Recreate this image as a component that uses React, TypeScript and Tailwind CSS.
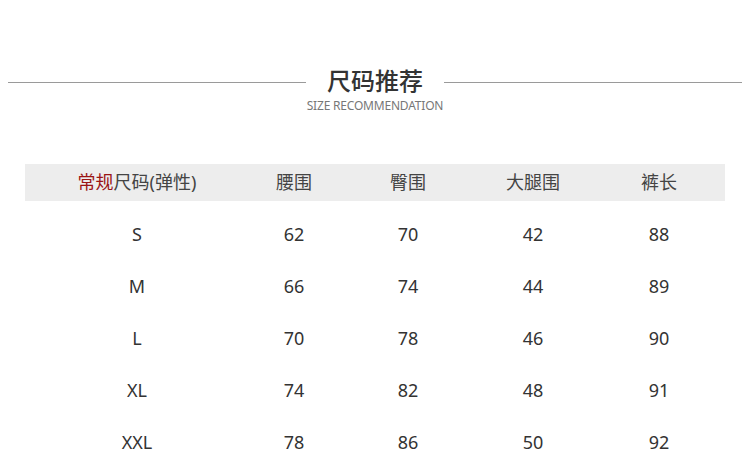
const rows = [
  ['S', '62', '70', '42', '88'],
  ['M', '66', '74', '44', '89'],
  ['L', '70', '78', '46', '90'],
  ['XL', '74', '82', '48', '91'],
  ['XXL', '78', '86', '50', '92'],
];

const cols = 'grid grid-cols-[224px_90px_138px_112px_136px]';

export default function App() {
  return (
    <div
      className="w-[750px] h-[475px] bg-white overflow-hidden text-[#333]"
      style={{ fontFamily: '"Noto Sans", "Noto Sans CJK SC", sans-serif' }}
    >
      <div className="pt-[65px] flex flex-col items-center">
        <div className="w-full flex items-center px-[8px]">
          <div className="flex-1 h-px bg-[#9a9a9a] mt-[3px]" />
          <h1 className="px-[21px] text-[24px] leading-[32px] font-medium text-[#333]">尺码推荐</h1>
          <div className="flex-1 h-px bg-[#9a9a9a] mt-[3px]" />
        </div>
        <p className="mt-[1px] text-[12px] leading-[16px] text-[#777] tracking-[-0.2px]">SIZE RECOMMENDATION</p>
      </div>

      <div className="mx-[25px] mt-[50px]">
        <div className={`${cols} h-[37px] items-center bg-[#ededed] text-[18px] text-[#444]`}>
          <div className="text-center">
            <span className="text-[#9b1515]">常规</span>尺码(弹性)
          </div>
          <div className="text-center">腰围</div>
          <div className="text-center">臀围</div>
          <div className="text-center">大腿围</div>
          <div className="text-center pl-[4px]">裤长</div>
        </div>
        <div className="mt-[7px]">
          {rows.map((r) => (
            <div key={r[0]} className={`${cols} h-[52px] items-center text-[18px] text-[#333]`}>
              {r.map((v, i) => (
                <div key={i} className={i === 4 ? 'text-center pl-[4px]' : 'text-center'}>
                  {v}
                </div>
              ))}
            </div>
          ))}
        </div>
      </div>
    </div>
  );
}
